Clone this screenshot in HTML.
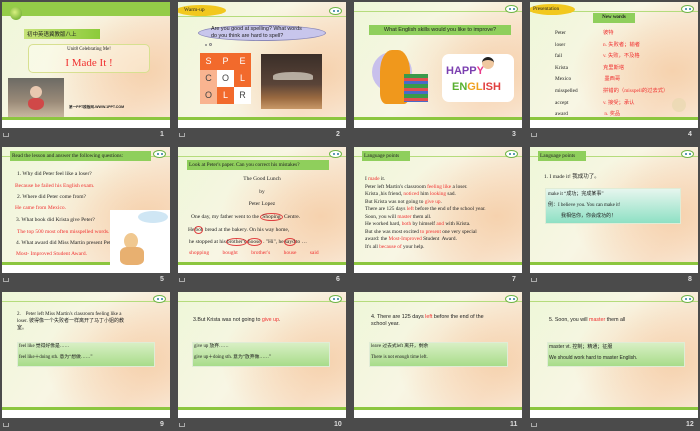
<!DOCTYPE html>
<html><head><meta charset="utf-8"><style>
*{margin:0;padding:0;box-sizing:border-box}
body{width:700px;height:431px;background:#4b4b4b;position:relative;overflow:hidden;font-family:"Liberation Serif","Noto Sans CJK SC",serif;color:#222}
.s{position:absolute;width:168px;height:126px;overflow:hidden;background:radial-gradient(ellipse 60% 55% at 85% 55%,#f6d2ae 0%,rgba(248,220,192,0) 100%),linear-gradient(125deg,#eef7d8 0%,#f8f6e4 45%,#f9e6d2 78%,#fbefe2 100%)}
.s .bb{position:absolute;left:0;top:115px;width:168px;height:3px;background:#8cc63f}
.s .wb{position:absolute;left:0;top:118px;width:168px;height:8px;background:#fff}
.hl{position:absolute;left:0;top:14px;width:168px;height:1px;background:#b5dc7c}
.logo{position:absolute;left:151px;top:5px;width:13px;height:8px;border-radius:50%;background:#fff;border:1px solid #6fb445}
.logo:before{content:"";position:absolute;left:3px;top:2px;width:2px;height:2px;background:#2a7a9c;border-radius:50%;box-shadow:4px 0 #2a7a9c}
.a{position:absolute;white-space:nowrap;font-size:5.5px;line-height:1}
.lab{background:#8fcf5c;padding:1px 2px}
.r{color:#f03030}
.sans{font-family:"Liberation Sans","Noto Sans CJK SC",sans-serif}
.num{position:absolute;color:#ddd;font-size:7px;font-weight:bold;font-family:"Liberation Sans",sans-serif}
.ic{position:absolute;width:6px;height:4px;border:1px solid #aaa;border-top:none}
.box{position:absolute;background:linear-gradient(180deg,#d8efc4,#a8dc8a);border:1px solid #e0ecd6}
.cell{position:absolute;width:17px;height:17px;font:9px "Liberation Sans",sans-serif;text-align:center;line-height:17px;color:#444}
.el{position:absolute;left:-2px;top:3px;height:11px;background:#f2c81e;border-radius:50%;font-size:5.5px;line-height:11px;padding-left:8px}
</style></head><body>

<!-- 1 -->
<div class="s" style="left:2px;top:2px">
<div style="position:absolute;left:0;top:0;width:168px;height:14px;background:#94cc48"></div>
<div style="position:absolute;left:8px;top:5px;width:12px;height:13px;border-radius:50%;background:radial-gradient(circle at 40% 40%,#d8f080,#5aa020)"></div>
<div class="a" style="left:22px;top:27px;width:76px;height:10px;background:linear-gradient(90deg,#c6e278,#8ccb3a);font-size:5.5px;line-height:10px;padding-left:3px;font-family:'Noto Sans CJK SC',sans-serif">初中英语冀教版八上</div>
<div style="position:absolute;left:26px;top:42px;width:122px;height:29px;border:1px solid #d7e090;border-radius:5px;background:rgba(255,255,240,.4)"></div>
<div class="a" style="left:26px;width:122px;text-align:center;top:46px;font-size:4.8px">Unit8 Celebrating Me!</div>
<div class="a r" style="left:26px;width:122px;text-align:center;top:56px;font-size:11px">I Made It !</div>
<div style="position:absolute;left:6px;top:76px;width:56px;height:39px;background:linear-gradient(180deg,#6c6a64,#9a8a78 60%,#c8b8a0)"></div>
<div style="position:absolute;left:26px;top:96px;width:16px;height:12px;background:#d04848;border-radius:40% 40% 50% 50%"></div>
<div style="position:absolute;left:28px;top:84px;width:12px;height:12px;background:#e8c8b0;border-radius:50%"></div>
<div class="a sans" style="left:67px;top:104px;font-size:3.6px;font-weight:bold">第一PPT模板网-WWW.1PPT.COM</div>
<div class="bb"></div><div class="wb"></div>
</div>
<div class="ic" style="left:3px;top:133px"></div><div class="num" style="left:160px;top:131px">1</div>

<!-- 2 -->
<div class="s" style="left:178px;top:2px">
<div class="hl"></div><div class="logo"></div>
<div class="el" style="width:50px">Warm-up</div>
<div style="position:absolute;left:20px;top:23px;width:128px;height:16px;background:#c8c6ec;border:1px solid #8a88b8;border-radius:50%"></div>
<div class="a sans" style="left:33px;top:25px;font-size:5.4px;color:#222">Are you good at spelling? What words</div>
<div class="a sans" style="left:33px;top:32px;font-size:5.4px;color:#222">do you think are hard to spell?</div>
<div style="position:absolute;left:27px;top:42px;width:2px;height:2px;border:1px solid #888;border-radius:50%"></div>
<div style="position:absolute;left:31px;top:41px;width:3px;height:3px;border:1px solid #888;border-radius:50%"></div>
<div class="cell" style="left:22px;top:51px;background:#f26a2c;color:#fff">S</div>
<div class="cell" style="left:39px;top:51px;background:#f26a2c;color:#fff">P</div>
<div class="cell" style="left:56px;top:51px;background:#f26a2c;color:#fff">E</div>
<div class="cell" style="left:22px;top:68px;background:#f9b490">C</div>
<div class="cell" style="left:39px;top:68px;background:#fff">O</div>
<div class="cell" style="left:56px;top:68px;background:#f26a2c;color:#fff">L</div>
<div class="cell" style="left:22px;top:85px;background:#f9b490">O</div>
<div class="cell" style="left:39px;top:85px;background:#f26a2c;color:#fff">L</div>
<div class="cell" style="left:56px;top:85px;background:#fff">R</div>
<div style="position:absolute;left:83px;top:52px;width:61px;height:55px;background:linear-gradient(180deg,#3a2e28,#5a4438 55%,#9a6a40 80%,#c89868)"></div>
<div style="position:absolute;left:95px;top:70px;width:40px;height:8px;background:#cfc8bc;border-radius:50% 50% 10% 10%;opacity:.8"></div>
<div class="bb"></div><div class="wb"></div>
</div>
<div class="ic" style="left:179px;top:133px"></div><div class="num" style="left:336px;top:131px">2</div>

<!-- 3 -->
<div class="s" style="left:354px;top:2px">
<div class="hl" style="top:9px"></div><div class="logo" style="top:3px"></div>
<div class="a sans lab" style="left:15px;top:23px;width:142px;height:10px;line-height:8px;font-size:5.5px;text-align:center">What English skills would you like to improve?</div>
<div style="position:absolute;left:18px;top:50px;width:40px;height:40px;background:#c8c0ec;border-radius:50%"></div>
<div style="position:absolute;left:26px;top:48px;width:30px;height:54px;background:#f0981c;border-radius:40% 40% 20% 20%"></div>
<div style="position:absolute;left:50px;top:72px;width:24px;height:28px;background:repeating-linear-gradient(180deg,#3a9a4a 0 4px,#e05050 4px 7px,#4a6ac8 7px 10px)"></div>
<div style="position:absolute;left:88px;top:52px;width:72px;height:48px;background:#fff;border-radius:7px"></div>
<div class="a sans" style="left:92px;top:64px;font-size:11px;font-weight:bold;color:#7b3fb0">HAPP<span style="color:#e83a8a">Y</span></div>
<div class="a sans" style="left:98px;top:80px;font-size:11px;font-weight:bold;color:#58b030">EN<span style="color:#f0a020">GL</span><span style="color:#e04040">ISH</span></div>
<div style="position:absolute;left:128px;top:55px;width:12px;height:12px;background:#f0c8a0;border-radius:50%;border-top:3px solid #222"></div>
<div class="bb"></div><div class="wb"></div>
</div>
<div class="num" style="left:512px;top:131px">3</div>

<!-- 4 -->
<div class="s" style="left:530px;top:2px">
<div class="hl" style="top:9px"></div><div class="logo" style="top:3px"></div>
<div class="el" style="width:46px;left:-1px;top:2px;padding-left:4px;font-size:5.3px">Presentation</div>
<div class="a lab" style="left:63px;top:11px;width:42px;height:10px;line-height:8px;text-align:center;font-weight:bold;font-size:5px">New words</div>
<div class="a" style="left:25px;top:26px;line-height:11.6px;white-space:pre;font-size:5.3px">Peter
loser
fail
Krista
Mexico
misspelled
accept
award</div>
<div class="a r" style="left:73px;top:26px;line-height:11.6px;white-space:pre;font-size:5.3px;font-family:'Liberation Serif','Noto Sans CJK SC',serif">彼特
n. 失败者；输者
v. 失败，不及格
克里斯塔
 墨西哥
拼错的（misspell的过去式）
v. 接受；承认
 n. 奖品</div>
<div style="position:absolute;left:142px;top:96px;width:14px;height:14px;background:#e8d8b0;border-radius:50%;opacity:.7"></div>
<div class="bb"></div><div class="wb"></div>
</div>
<div class="ic" style="left:531px;top:133px"></div><div class="num" style="left:688px;top:131px">4</div>

<!-- 5 -->
<div class="s" style="left:2px;top:147px">
<div class="hl" style="top:9px"></div><div class="logo" style="top:3px"></div>
<div class="a lab" style="left:8px;top:4px;width:141px;height:10px;line-height:8px;font-size:5.3px">Read the lesson and answer the following questions:</div>
<div class="a" style="left:15px;top:25px">1. Why did Peter feel like a loser?</div>
<div class="a r" style="left:13px;top:37px">Because he failed his English exam.</div>
<div class="a" style="left:15px;top:48px">2. Where did Peter come from?</div>
<div class="a r" style="left:13px;top:59px">He came from Mexico.</div>
<div class="a" style="left:14px;top:71px">3. What book did Krista give Peter?</div>
<div class="a r" style="left:15px;top:83px">The top 500 most often misspelled words.</div>
<div class="a" style="left:14px;top:94px">4. What award did Miss Martin present Peter?</div>
<div class="a r" style="left:14px;top:105px">Most- Improved Student Award.</div>
<div style="position:absolute;left:108px;top:63px;width:60px;height:63px;background:#fff"></div>
<div style="position:absolute;left:136px;top:64px;width:30px;height:12px;background:#cfe6f4;border-radius:50%"></div>
<div style="position:absolute;left:122px;top:86px;width:14px;height:16px;background:#f0c890;border-radius:50%"></div>
<div style="position:absolute;left:118px;top:100px;width:24px;height:18px;background:#e8b070;border-radius:30%"></div>
<div class="bb" style="width:108px"></div><div class="wb" style="width:108px"></div>
</div>
<div class="ic" style="left:3px;top:278px"></div><div class="num" style="left:160px;top:276px">5</div>

<!-- 6 -->
<div class="s" style="left:178px;top:147px">
<div class="hl" style="top:9px"></div><div class="logo" style="top:3px"></div>
<div class="a lab" style="left:9px;top:13px;width:142px;height:10px;line-height:8px;font-size:5.3px">Look at Peter's paper. Can you correct his mistakes?</div>
<div class="a" style="left:0;width:168px;text-align:center;top:30px">The Good Lunch</div>
<div class="a" style="left:0;width:168px;text-align:center;top:43px">by</div>
<div class="a" style="left:0;width:168px;text-align:center;top:55px">Peter Lopez</div>
<div class="a" style="left:13px;top:68px">One day, my father went to the <span style="border:1px solid #e04040;border-radius:50%;padding:0 1px">Shoping</span> Centre.</div>
<div class="a" style="left:10px;top:81px">He<span style="border:1px solid #e04040;border-radius:50%">bot</span> bread at the bakery. On his way home,</div>
<div class="a" style="left:11px;top:93px">he stopped at his<span style="border:1px solid #e04040;border-radius:50%">brother's</span><span style="border:1px solid #e04040;border-radius:50%">hoose</span> . "Hi", he<span style="border:1px solid #e04040;border-radius:50%">sayd</span>to …</div>
<div class="a r" style="left:11px;top:104px;word-spacing:12px">shopping bought brother's house said</div>
<div class="bb"></div><div class="wb"></div>
</div>
<div class="ic" style="left:179px;top:278px"></div><div class="num" style="left:336px;top:276px">6</div>

<!-- 7 -->
<div class="s" style="left:354px;top:147px">
<div class="hl" style="top:9px"></div><div class="logo" style="top:3px"></div>
<div class="a lab" style="left:8px;top:4px;width:48px;height:10px;line-height:8px;font-size:5.3px">Language points</div>
<div class="a" style="left:11px;top:29px;line-height:7.5px;font-size:5.3px;white-space:pre">I <span class="r">made</span> it.
Peter left Martin's classroom <span class="r">feeling like</span> a loser.
Krista ,his friend, <span class="r">noticed</span> him <span class="r">looking</span> sad.
But Krista was not going to <span class="r">give up</span>.
There are 125 days <span class="r">left</span> before the end of the school year.
Soon, you will <span class="r">master</span> them all.
He worked hard, <span class="r">both</span> by himself <span class="r">and</span> with Krista.
But she was most excited <span class="r">to present</span> one very special
award: the <span class="r">Most-Improved</span> Student  Award.
It's all <span class="r">because of</span> your help.</div>
<div class="bb"></div><div class="wb"></div>
</div>
<div class="num" style="left:512px;top:276px">7</div>

<!-- 8 -->
<div class="s" style="left:530px;top:147px">
<div class="hl" style="top:9px"></div><div class="logo" style="top:3px"></div>
<div class="a lab" style="left:8px;top:4px;width:48px;height:10px;line-height:8px;font-size:5.3px">Language points</div>
<div class="a" style="left:14px;top:28px">1.  I made it! 我成功了。</div>
<div class="box" style="left:15px;top:41px;width:136px;height:36px;background:linear-gradient(180deg,#e6f6ee,#8ee0c4)"></div>
<div class="a" style="left:18px;top:45px;font-size:5px">make it “成功；完成某事”</div>
<div class="a" style="left:18px;top:56px;font-size:5px">例：I believe  you. You can make  it!</div>
<div class="a" style="left:31px;top:67px;font-size:5px">我相信你，你会成功的！</div>
<div class="bb"></div><div class="wb"></div>
</div>
<div class="ic" style="left:531px;top:278px"></div><div class="num" style="left:688px;top:276px">8</div>

<!-- 9 -->
<div class="s" style="left:2px;top:292px">
<div class="hl" style="top:9px"></div><div class="logo" style="top:3px"></div>
<div class="a" style="left:15px;top:19px;font-size:5px;line-height:7px;white-space:pre">2.    Peter left Miss Martin's classroom feeling like a
loser. 彼得像一个失败者一样离开了马丁小姐的教
室。</div>
<div class="box" style="left:15px;top:50px;width:138px;height:25px"></div>
<div class="a" style="left:17px;top:53px;font-size:4.8px">feel like  觉得好像是……</div>
<div class="a" style="left:17px;top:64px;font-size:4.8px">feel like＋doing  sth.  意为“想做……”</div>
<div class="bb"></div><div class="wb"></div>
</div>
<div class="ic" style="left:3px;top:423px"></div><div class="num" style="left:160px;top:421px">9</div>

<!-- 10 -->
<div class="s" style="left:178px;top:292px">
<div class="hl" style="top:9px"></div><div class="logo" style="top:3px"></div>
<div class="a sans" style="left:15px;top:26px;font-size:5.3px">3.But Krista was not going to <span class="r">give up</span>.</div>
<div class="box" style="left:14px;top:50px;width:138px;height:25px"></div>
<div class="a" style="left:16px;top:53px;font-size:4.8px">give up 放弃……</div>
<div class="a" style="left:16px;top:64px;font-size:4.8px">give up＋doing sth.  意为“放弃做……”</div>
<div class="bb"></div><div class="wb"></div>
</div>
<div class="ic" style="left:179px;top:423px"></div><div class="num" style="left:334px;top:421px">10</div>

<!-- 11 -->
<div class="s" style="left:354px;top:292px">
<div class="hl" style="top:9px"></div><div class="logo" style="top:3px"></div>
<div class="a sans" style="left:17px;top:22px;font-size:5.4px;line-height:7px;white-space:pre">4. There are 125 days <span class="r">left</span> before the end of the
school year.</div>
<div class="box" style="left:15px;top:50px;width:139px;height:25px"></div>
<div class="a" style="left:17px;top:53px;font-size:4.8px">leave 过去式left    离开，剩余</div>
<div class="a" style="left:17px;top:64px;font-size:4.8px">There is not enough time left.</div>
<div class="bb"></div><div class="wb"></div>
</div>
<div class="num" style="left:510px;top:421px">11</div>

<!-- 12 -->
<div class="s" style="left:530px;top:292px">
<div class="hl" style="top:9px"></div><div class="logo" style="top:3px"></div>
<div class="a sans" style="left:19px;top:26px;font-size:5.3px">5. Soon, you will <span class="r">master</span> them all</div>
<div class="box" style="left:17px;top:50px;width:138px;height:25px"></div>
<div class="a sans" style="left:19px;top:53px;font-size:5px">master vt. 控制；精通；征服</div>
<div class="a sans" style="left:19px;top:64px;font-size:5px">We should work hard to master English.</div>
<div class="bb"></div><div class="wb"></div>
</div>
<div class="ic" style="left:531px;top:423px"></div><div class="num" style="left:686px;top:421px">12</div>

</body></html>
